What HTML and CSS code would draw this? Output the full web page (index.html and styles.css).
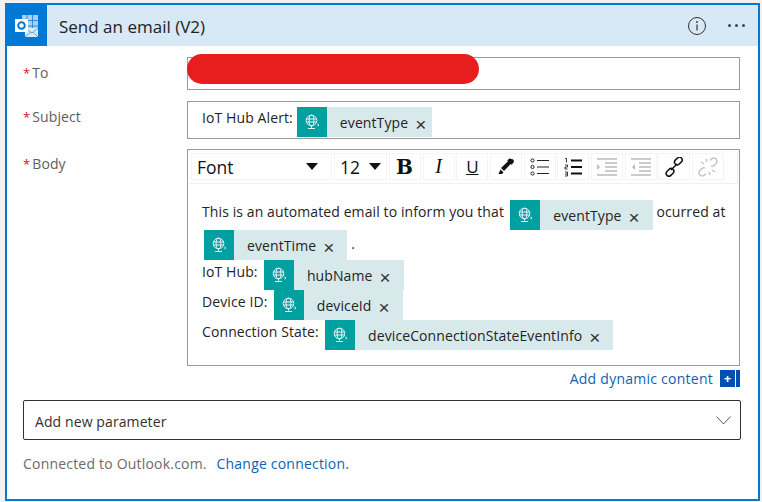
FILE: index.html
```html
<!DOCTYPE html>
<html lang="en">
<head>
<meta charset="utf-8">
<title>Send an email (V2)</title>
<link rel="stylesheet" href="styles.css">
</head>
<body>
<svg class="defs" width="0" height="0" aria-hidden="true">
  <symbol id="globe" viewBox="0 0 16 16">
    <g fill="none" stroke="#fff" stroke-width=".9">
      <circle cx="7.5" cy="6.5" r="5.3"/>
      <ellipse cx="7.5" cy="6.5" rx="2.4" ry="5.3"/>
      <path d="M2.4 5h10.2M2.4 8h10.2"/>
      <path d="M7.5 11.8v2M4 14.5h7"/>
      <path d="M13.5 10l1.5 1-1.5 1"/>
    </g>
  </symbol>
</svg>
<main class="card">
  <header class="head">
    <div class="logo">
      <svg width="26" height="26" viewBox="0 0 26 26">
        <path fill="#a9d0f0" d="M8 2h16v16H8z"/>
        <path fill="none" stroke="#2b8ede" stroke-width="1" d="M13 2v16M18.500 2v16M8 7.500h16M8 13h16"/>
        <path fill="#d9eaf8" d="M11 15l13 0v9H11z"/>
        <path fill="none" stroke="#5ba8e6" stroke-width="1" d="M11 15l7 5 6-5M11 24l6-5M24 24l-5-5"/>
        <path fill="#fff" d="M1 6h13v13H1z"/>
        <circle cx="7.500" cy="12.500" r="3.300" fill="none" stroke="#0078d4" stroke-width="2"/>
      </svg>
    </div>
    <h1 class="title">Send an email (V2)</h1>
    <svg class="info" width="20" height="20" viewBox="0 0 20 20">
      <circle cx="10" cy="10" r="8.500" fill="none" stroke="#333" stroke-width="1"/>
      <path d="M10 8.500v6" stroke="#333" stroke-width="1.200"/>
      <circle cx="10" cy="6" r=".9" fill="#333"/>
    </svg>
    <div class="more"><i></i><i></i><i></i></div>
  </header>

  <section class="form">
    <div class="row row-to">
      <div class="label"><span class="req">*</span>To</div>
      <div class="field field-to"><span class="redact"></span></div>
    </div>
    <div class="row row-subject">
      <div class="label"><span class="req">*</span>Subject</div>
      <div class="field field-subject">
        <span class="txt">IoT Hub Alert:</span>
        <span class="chip chip-subject"><span class="chip-ico"><svg width="16" height="16"><use href="#globe"/></svg></span><span class="chip-name">eventType</span><span class="x">×</span></span>
      </div>
    </div>
    <div class="row row-body">
      <div class="label"><span class="req">*</span>Body</div>
      <div class="field field-body">
        <div class="toolbar">
          <div class="tb tb-font"><span>Font</span><b class="caret"></b></div>
          <div class="tb tb-size"><span>12</span><b class="caret"></b></div>
          <div class="tb tb-btn bold">B</div>
          <div class="tb tb-btn ital">I</div>
          <div class="tb tb-btn under">U</div>
          <div class="tb tb-btn">
            <svg width="20" height="20" viewBox="0 0 20 20"><path d="M15.500 2a2.300 2.300 0 0 1 1.900 3.700l-2 2-.7-.7-6.700 7-3-3 7-6.700-.7-.7 2-2c.4.100.6.400 2.200.400z" fill="#111"/><path d="M4.500 12.500l3 3-1.500 1.500H2.500z" fill="#111"/></svg>
          </div>
          <div class="tb tb-btn">
            <svg width="22" height="20" viewBox="0 0 22 20"><g fill="none" stroke="#222"><circle cx="3.500" cy="3.500" r="1.600"/><circle cx="3.500" cy="10" r="1.600"/><circle cx="3.500" cy="16.500" r="1.600"/></g><path d="M8 3.500h12M8 10h12M8 16.500h12" stroke="#222" stroke-width="1.200"/></svg>
          </div>
          <div class="tb tb-btn">
            <svg width="22" height="20" viewBox="0 0 22 20"><path d="M3 1.500h1.500v4M3 8h2.500v2H3v2h2.500M3 15h2.500v4H3M3 17h2.500" fill="none" stroke="#222" stroke-width=".9"/><path d="M9 3.500h11M9 10h11M9 16.500h11" stroke="#111" stroke-width="1.800"/></svg>
          </div>
          <div class="tb tb-btn">
            <svg width="22" height="20" viewBox="0 0 22 20"><path d="M1 2h20M9 6h12M9 10h12M9 14h12M1 18h20" stroke="#bbb" stroke-width="1.300"/><path d="M1 7l3 3-3 3z" fill="#bbb"/></svg>
          </div>
          <div class="tb tb-btn">
            <svg width="22" height="20" viewBox="0 0 22 20"><path d="M1 2h20M9 6h12M9 10h12M9 14h12M1 18h20" stroke="#bbb" stroke-width="1.300"/><path d="M5 7l-3 3 3 3z" fill="#bbb"/></svg>
          </div>
          <div class="tb tb-btn">
            <svg width="20" height="20" viewBox="0 0 20 20"><g fill="none" stroke="#111" stroke-width="1.500"><rect x="10" y="1.500" width="8.500" height="5.500" rx="2.700" transform="rotate(-45 14 4)"/><rect x="1.500" y="12.500" width="8.500" height="5.500" rx="2.700" transform="rotate(-45 6 15)"/><path d="M7 13l6-6"/></g></svg>
          </div>
          <div class="tb tb-btn">
            <svg width="22" height="20" viewBox="0 0 22 20"><g fill="none" stroke="#c4c4c4" stroke-width="1.500"><path d="M13 3.500l1.500-1.500a3 3 0 0 1 4.500 4.500l-2 2a3 3 0 0 1-3 .5"/><path d="M9 16.500L7.500 18A3 3 0 0 1 3 13.500l2-2a3 3 0 0 1 3-.5"/><path d="M15 13l3 2M12 15l1 3M7 7L4 5M10 5L9 2"/></g></svg>
          </div>
        </div>
        <div class="editor">
          <p class="line">This is an automated email to inform you that <span class="chip"><span class="chip-ico"><svg width="16" height="16"><use href="#globe"/></svg></span><span class="chip-name">eventType</span><span class="x">×</span></span> ocurred at</p>
          <p class="line line-tall"><span class="chip chip-first"><span class="chip-ico"><svg width="16" height="16"><use href="#globe"/></svg></span><span class="chip-name">eventTime</span><span class="x">×</span></span> .</p>
          <p class="line">IoT Hub: <span class="chip"><span class="chip-ico"><svg width="16" height="16"><use href="#globe"/></svg></span><span class="chip-name">hubName</span><span class="x">×</span></span></p>
          <p class="line">Device ID: <span class="chip"><span class="chip-ico"><svg width="16" height="16"><use href="#globe"/></svg></span><span class="chip-name">deviceId</span><span class="x">×</span></span></p>
          <p class="line">Connection State: <span class="chip"><span class="chip-ico"><svg width="16" height="16"><use href="#globe"/></svg></span><span class="chip-name">deviceConnectionStateEventInfo</span><span class="x">×</span></span></p>
        </div>
      </div>
    </div>
    <div class="dynamic"><a class="link">Add dynamic content</a><span class="plus">+</span><span class="plus-bar"></span></div>
    <div class="param">
      <span class="param-text">Add new parameter</span>
      <svg width="15" height="9" viewBox="0 0 15 9"><path d="M.5.500L7.500 8l7-7.500" fill="none" stroke="#555"/></svg>
    </div>
    <p class="conn">Connected to Outlook.com. <a class="link-2">Change connection.</a></p>
  </section>
</main>
</body>
</html>
```

FILE: styles.css
```css
* { box-sizing: border-box; }
html, body { margin: 0; padding: 0; }
body {
  width: 762px;
  height: 502px;
  overflow: hidden;
  background: #f1f1f1;
  padding: 3px 2px 0 5px;
  font-family: "Open Sans", "Noto Sans", sans-serif;
  font-size: 14px;
  letter-spacing: .1px;
  color: #252423;
}
.defs { position: absolute; }
.card {
  width: 755px;
  height: 498px;
  background: #fff;
  border: 2px solid #0078d4;
  display: flex;
  flex-direction: column;
}
.head {
  height: 41px;
  flex: none;
  background: #d7e8f7;
  display: flex;
  align-items: center;
}
.logo {
  width: 40px;
  height: 41px;
  background: #0078d4;
  display: flex;
  align-items: center;
  justify-content: center;
}
.title {
  margin: 2px 0 0 12px;
  font-size: 17px;
  font-weight: 400;
  letter-spacing: 0;
  color: #222;
  flex: 1;
}
.info { margin-right: 21px; }
.more { display: flex; gap: 4px; margin-right: 12px; width: 18px; }
.more i { width: 3px; height: 3px; background: #444; display: block; border-radius: 50%; }

.form { padding: 11px 18px 0 16px; display: flex; flex-direction: column; flex: 1; }
.row { display: flex; }
.label { width: 164px; flex: none; color: #605e5c; padding-top: 6px; }
.req { color: #d80f2c; margin-right: 2px; font-size: 13px; }
.field { width: 553px; border: 1px solid #999; position: relative; }
.row-to .field-to { height: 33px; }
.redact {
  position: absolute;
  left: -1px;
  top: -4px;
  width: 292px;
  height: 30px;
  border-radius: 15px;
  background: #e81e1e;
}
.row-subject { margin-top: 11px; }
.field-subject { height: 38px; display: flex; align-items: center; padding: 0 0 0 14px; }
.field-subject .txt { margin-top: -5px; }
.field-subject .chip { margin-top: 4px; margin-left: 4px; }
.chip-subject .x { margin-right: 6px; }
.row-body { margin-top: 10px; }
.row-body .label { padding-top: 5px; }
.field-body { height: 217px; padding: 1px; }
.toolbar {
  height: 33px;
  display: flex;
  gap: 1.700px;
  padding: 0 2px;
  border-bottom: 1px solid #f0f0f0;
  border-right: 1px solid #f0f0f0;
}
.tb {
  height: 27px;
  margin-top: 2px;
  border: 1px solid #f4f4f4;
  display: flex;
  align-items: center;
  justify-content: center;
  color: #111;
  flex: none;
  letter-spacing: 0;
}
.tb-font { width: 141px; justify-content: space-between; padding: 0 13px 0 5px; font-size: 17.500px; margin-right: .3px; }
.tb-size { width: 53px; justify-content: space-between; padding: 0 5px 0 5px; font-size: 17.500px; margin-right: .3px; }
.caret { width: 0; height: 0; border-left: 6.500px solid transparent; border-right: 6.500px solid transparent; border-top: 7px solid #111; }
.tb-btn { width: 32px; }
.bold { font-family: "DejaVu Serif", serif; font-weight: 700; font-size: 20px; padding-right: 1px; }
.ital { font-family: "Liberation Serif", serif; font-style: italic; font-size: 20px; }
.under { text-decoration: underline; font-size: 17px; }

.editor { padding: 16px 0 0 13px; }
.line { margin: 0; height: 30px; white-space: nowrap; line-height: 23px; }
.line-tall { line-height: 28px; }
.chip {
  display: inline-flex;
  height: 30px;
  margin-left: 2.500px;
  background: #d8e9ec;
  align-items: center;
  vertical-align: top;
  color: #252423;
  line-height: 20px;
}
.chip-first { margin-left: 2px; }
.chip-ico {
  width: 30px;
  height: 30px;
  background: #00a0a0;
  display: flex;
  align-items: center;
  justify-content: center;
  margin-right: 13px;
}
.chip-name { padding-bottom: 0; padding-top: 1px; }
.x { font-size: 19px; line-height: 1; margin: 4px 13px 0 7px; color: #333; font-family: "Liberation Sans", sans-serif; }
.dynamic {
  display: flex;
  justify-content: flex-end;
  align-items: center;
  height: 24px;
  width: 717px;
}
.link { color: #0f5fb5; letter-spacing: .25px; }
.plus {
  width: 15px;
  height: 17px;
  margin-left: 7px;
  background: #0050b3;
  color: #fff;
  font-weight: 700;
  text-align: center;
  line-height: 16px;
  font-size: 13px;
}
.plus-bar { width: 4px; height: 17px; margin-left: 1px; background: #0050b3; }
.param {
  width: 718px;
  height: 40px;
  margin-top: 10px;
  border: 1px solid #323130;
  border-radius: 2px;
  display: flex;
  align-items: center;
  justify-content: space-between;
  padding: 0 9px 0 11px;
  color: #323130;
}
.param-text { padding-top: 2px; }
.conn { margin: 15px 0 0; color: #6b6b6b; line-height: 18px; letter-spacing: .2px; }
.link-2 { color: #0f5fb5; margin-left: 6px; }
```
